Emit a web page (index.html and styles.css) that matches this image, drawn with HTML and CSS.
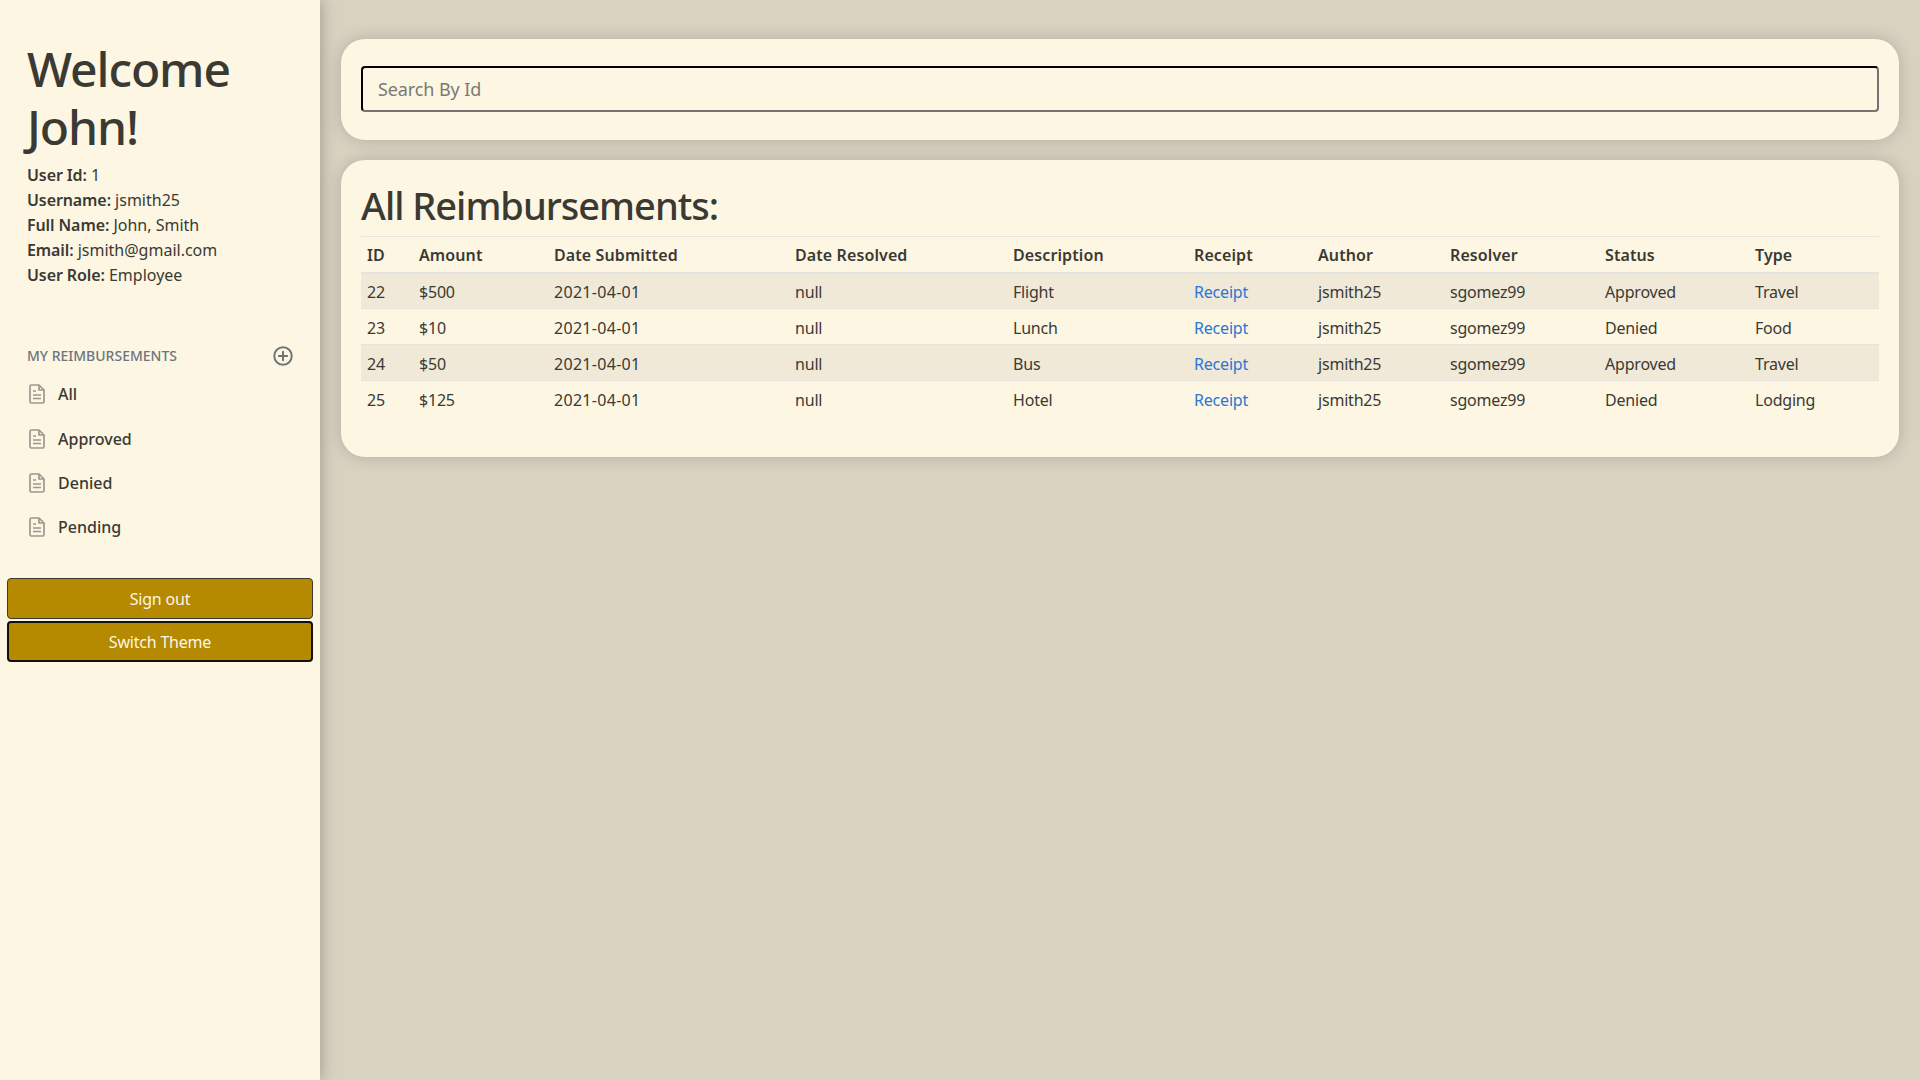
FILE: index.html
```html
<!doctype html>
<html>
  <head>
    <title>Reimbursements</title>
    <meta charset="utf-8" />
    <link rel="stylesheet" href="styles.css">
  </head>
  <body>
    <nav class="sidebar">
      <div class="profile">
        <h1>Welcome John!</h1>
        <div class="info"><b>User Id:</b> 1</div>
        <div class="info"><b>Username:</b> jsmith25</div>
        <div class="info"><b>Full Name:</b> John, Smith</div>
        <div class="info"><b>Email:</b> jsmith@gmail.com</div>
        <div class="info"><b>User Role:</b> Employee</div>
      </div>
      <div class="side-heading">
        <span>My Reimbursements</span>
        <svg class="plus" viewBox="0 0 24 24" fill="none" stroke="currentColor" stroke-width="2.400" stroke-linecap="round">
          <circle cx="12" cy="12" r="10.5" />
          <path d="M12 7v10M7 12h10" />
        </svg>
      </div>
      <ul class="side-nav">
        <li>
          <svg class="doc" viewBox="0 0 16 20" fill="none" stroke="currentColor" stroke-width="1.7"><path d="M2.5 1h7.5l5 5v11.500a1.500 1.500 0 0 1-1.500 1.500h-11A1.500 1.500 0 0 1 1 17.500v-15A1.500 1.500 0 0 1 2.500 1z" /><path d="M10 1v5h5M4 7h3M4 11h8M4 14.500h8" /></svg>
          <a>All</a>
        </li>
        <li>
          <svg class="doc" viewBox="0 0 16 20" fill="none" stroke="currentColor" stroke-width="1.7"><path d="M2.5 1h7.5l5 5v11.500a1.500 1.500 0 0 1-1.500 1.500h-11A1.500 1.500 0 0 1 1 17.500v-15A1.500 1.500 0 0 1 2.500 1z" /><path d="M10 1v5h5M4 7h3M4 11h8M4 14.500h8" /></svg>
          <a>Approved</a>
        </li>
        <li>
          <svg class="doc" viewBox="0 0 16 20" fill="none" stroke="currentColor" stroke-width="1.7"><path d="M2.5 1h7.5l5 5v11.500a1.500 1.500 0 0 1-1.500 1.500h-11A1.500 1.500 0 0 1 1 17.500v-15A1.500 1.500 0 0 1 2.500 1z" /><path d="M10 1v5h5M4 7h3M4 11h8M4 14.500h8" /></svg>
          <a>Denied</a>
        </li>
        <li>
          <svg class="doc" viewBox="0 0 16 20" fill="none" stroke="currentColor" stroke-width="1.7"><path d="M2.5 1h7.5l5 5v11.500a1.500 1.500 0 0 1-1.500 1.500h-11A1.500 1.500 0 0 1 1 17.500v-15A1.500 1.500 0 0 1 2.500 1z" /><path d="M10 1v5h5M4 7h3M4 11h8M4 14.500h8" /></svg>
          <a>Pending</a>
        </li>
      </ul>
      <div class="side-buttons">
        <button class="btn">Sign out</button>
        <button class="btn btn-focus">Switch Theme</button>
      </div>
    </nav>
    <main class="content">
      <section class="card search-card">
        <input class="search" type="text" placeholder="Search By Id" />
      </section>
      <section class="card table-card">
        <h2>All Reimbursements:</h2>
        <table>
          <colgroup>
            <col class="c-id" /><col class="c-amount" /><col class="c-sub" /><col class="c-res" /><col class="c-desc" />
            <col class="c-rec" /><col class="c-author" /><col class="c-resolver" /><col class="c-status" /><col class="c-type" />
          </colgroup>
          <thead>
            <tr>
              <th>ID</th><th>Amount</th><th>Date Submitted</th><th>Date Resolved</th><th>Description</th>
              <th>Receipt</th><th>Author</th><th>Resolver</th><th>Status</th><th>Type</th>
            </tr>
          </thead>
          <tbody>
            <tr>
              <td>22</td><td>$500</td><td class="date">2021-04-01</td><td>null</td><td>Flight</td>
              <td><a class="link">Receipt</a></td><td>jsmith25</td><td>sgomez99</td><td>Approved</td><td>Travel</td>
            </tr>
            <tr>
              <td>23</td><td>$10</td><td class="date">2021-04-01</td><td>null</td><td>Lunch</td>
              <td><a class="link">Receipt</a></td><td>jsmith25</td><td>sgomez99</td><td>Denied</td><td>Food</td>
            </tr>
            <tr>
              <td>24</td><td>$50</td><td class="date">2021-04-01</td><td>null</td><td>Bus</td>
              <td><a class="link">Receipt</a></td><td>jsmith25</td><td>sgomez99</td><td>Approved</td><td>Travel</td>
            </tr>
            <tr>
              <td>25</td><td>$125</td><td class="date">2021-04-01</td><td>null</td><td>Hotel</td>
              <td><a class="link">Receipt</a></td><td>jsmith25</td><td>sgomez99</td><td>Denied</td><td>Lodging</td>
            </tr>
          </tbody>
        </table>
      </section>
    </main>
  </body>
</html>
```

FILE: styles.css
```css
* {
  box-sizing: border-box;
}

body {
  margin: 0;
  height: 100vh;
  overflow: hidden;
  display: flex;
  background: #d8d2c1;
  color: #3a3a33;
  font-family: "Noto Sans", sans-serif;
  font-size: 16px;
  line-height: 24px;
  letter-spacing: -0.2px;
}

.sidebar {
  width: 320px;
  flex: none;
  background: #fdf6e3;
  box-shadow: 0 0 16px rgba(0, 0, 0, 0.3);
  padding-top: 40px;
}

.profile {
  padding: 0 27px;
}

h1 {
  margin: 0 0 8px;
  font-size: 48px;
  line-height: 57.6px;
  font-weight: 500;
  letter-spacing: -1.1px;
}

.info {
  line-height: 25px;
  letter-spacing: 0;
}

.info b {
  font-weight: 600;
  letter-spacing: -0.1px;
}

.side-heading {
  display: flex;
  justify-content: space-between;
  align-items: center;
  margin-top: 56px;
  padding: 0 27px;
  color: #6c757d;
  font-size: 14px;
  font-weight: 500;
  letter-spacing: 0;
  text-transform: uppercase;
}

.plus {
  width: 20px;
  height: 20px;
}

.side-nav {
  list-style: none;
  margin: 4px 0 0;
  padding: 0 29px;
}

.side-nav li {
  display: flex;
  align-items: center;
  gap: 13px;
  height: 44.300px;
  font-weight: 500;
  letter-spacing: 0;
}

.doc {
  width: 16px;
  height: 20px;
  color: #9c9890;
}

.side-buttons {
  display: flex;
  flex-direction: column;
  gap: 2px;
  margin: 29px 7px 0;
}

.btn {
  height: 41px;
  background: #b58900;
  color: #fdf6e3;
  border: 1px solid #3a3a33;
  border-radius: 4px;
  font: inherit;
  letter-spacing: inherit;
}

.btn-focus {
  border: 2px solid #111;
}

.content {
  flex: 1;
  padding: 39px 21px 0 21px;
}

.card {
  background: #fdf6e3;
  border-radius: 24px;
  padding: 20px;
  box-shadow: 0 0 16px rgba(0, 0, 0, 0.18);
}

.search-card {
  padding: 27px 20px 28px;
  margin-bottom: 20px;
}

.search {
  display: block;
  width: 100%;
  height: 46px;
  padding: 0 15px;
  background: #fdf6e3;
  border: 2px inset #767676;
  border-color: #1f1e18 #767470 #767470 #1f1e18;
  border-radius: 4px;
  font: inherit;
  font-size: 18px;
  letter-spacing: -0.1px;
  color: inherit;
}

.search::placeholder {
  color: #7a7a72;
}

.table-card {
  height: 297px;
}

h2 {
  margin: 0 0 8px;
  padding-top: 2px;
  font-size: 38px;
  line-height: 46px;
  font-weight: 500;
  letter-spacing: -1px;
}

table {
  width: 100%;
  table-layout: fixed;
  border-collapse: collapse;
}

th,
td {
  padding: 2px 6px 0;
  text-align: left;
  height: 36px;
  border-top: 1px solid #e8e3dd;
  white-space: nowrap;
}

th {
  font-weight: 600;
  letter-spacing: 0.1px;
  border-bottom: 2px solid #e3e3e0;
}

.date {
  letter-spacing: 0.3px;
}

tbody tr:nth-child(odd) {
  background: #f0e9d8;
}

.link {
  color: #2a76d2;
}

.c-id { width: 52px; }
.c-amount { width: 135px; }
.c-sub { width: 241px; }
.c-res { width: 218px; }
.c-desc { width: 181px; }
.c-rec { width: 124px; }
.c-author { width: 132px; }
.c-resolver { width: 155px; }
.c-status { width: 150px; }
```
